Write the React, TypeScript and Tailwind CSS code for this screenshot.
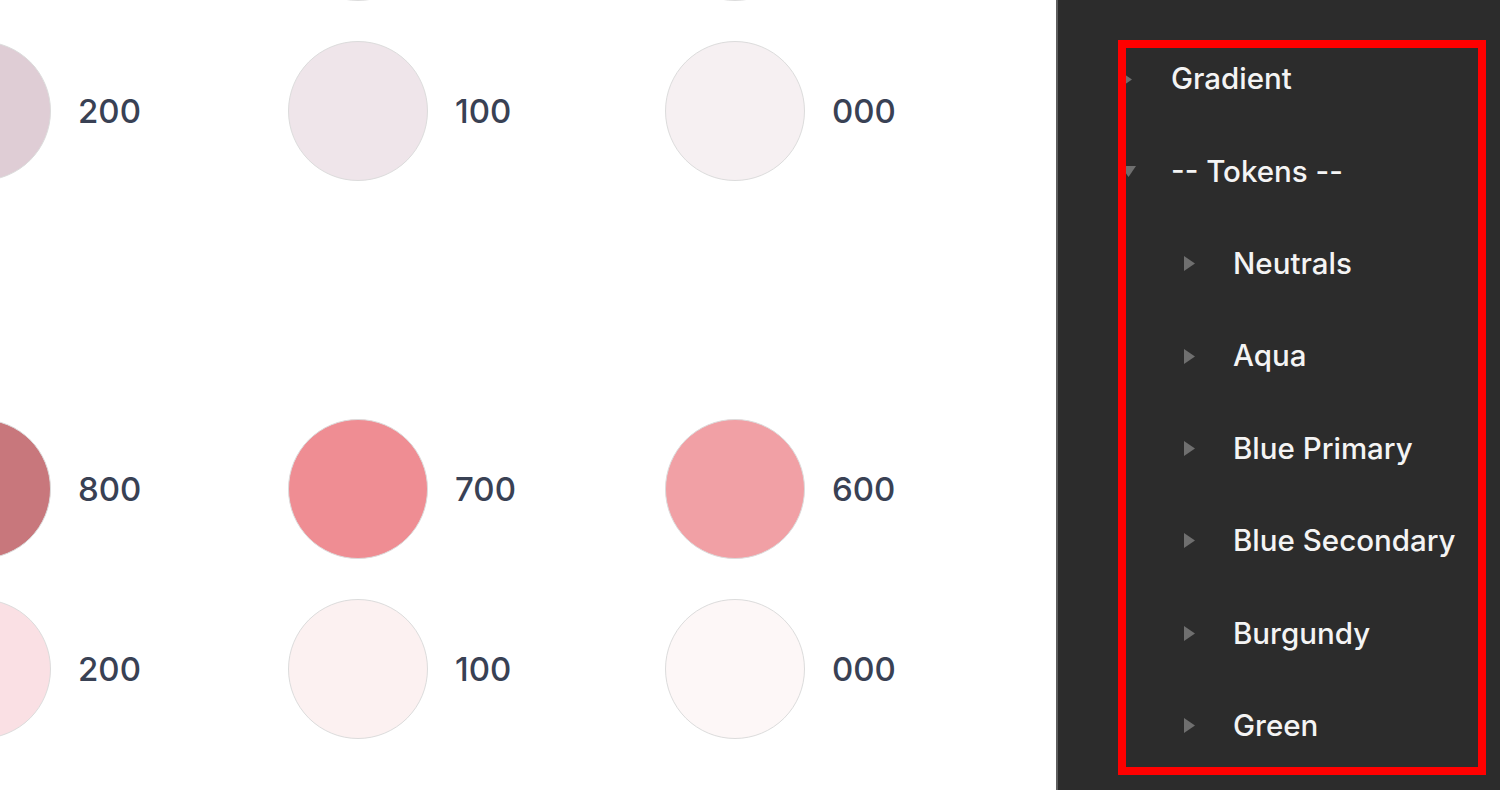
import React from "react";

type Swatch = { color: string; label: string };

const rows: Swatch[][] = [
  [
    { color: "#f3eef1", label: "" },
    { color: "#f8f5f6", label: "" },
    { color: "#fbf9fa", label: "" },
  ],
  [
    { color: "#dfcdd5", label: "200" },
    { color: "#efe5ea", label: "100" },
    { color: "#f6f0f2", label: "000" },
  ],
  [
    { color: "#c8777c", label: "800" },
    { color: "#ef8d93", label: "700" },
    { color: "#f1a0a5", label: "600" },
  ],
  [
    { color: "#fae0e4", label: "200" },
    { color: "#fcf1f1", label: "100" },
    { color: "#fdf7f7", label: "000" },
  ],
];

const tree = [
  { name: "Gradient", depth: 0, open: false },
  { name: "-- Tokens --", depth: 0, open: true },
  { name: "Neutrals", depth: 1, open: false },
  { name: "Aqua", depth: 1, open: false },
  { name: "Blue Primary", depth: 1, open: false },
  { name: "Blue Secondary", depth: 1, open: false },
  { name: "Burgundy", depth: 1, open: false },
  { name: "Green", depth: 1, open: false },
];

function SwatchCell({ swatch }: { swatch: Swatch }) {
  return (
    <div className="flex items-center gap-[27px]">
      <div
        className="w-[140px] h-[140px] shrink-0 rounded-full border border-[#dcdcdc]"
        style={{ backgroundColor: swatch.color }}
      />
      <span className="text-[33px] font-medium leading-none text-[#394154]">{swatch.label}</span>
    </div>
  );
}

function Caret({ open }: { open: boolean }) {
  if (open) {
    return (
      <svg width="15" height="11" viewBox="0 0 15 11" className="shrink-0">
        <path d="M0 0 L15 0 L7.5 11 Z" fill="#6f6f6f" />
      </svg>
    );
  }
  return (
    <svg width="11" height="15" viewBox="0 0 11 15" className="shrink-0">
      <path d="M0 0 L11 7.5 L0 15 Z" fill="#6f6f6f" />
    </svg>
  );
}

export default function App() {
  return (
    <div className="w-[1500px] h-[792px] overflow-hidden bg-white flex" style={{ fontFamily: "Inter, 'Noto Sans', sans-serif" }}>
      {/* Swatch canvas */}
      <div className="w-[1056px] h-full shrink-0 overflow-hidden">
        <div className="ml-[-89px] mt-[-139px] flex flex-col">
          {rows.map((row, i) => (
            <div
              key={i}
              className={`grid grid-cols-[377px_377px_377px] ${i === 0 ? "" : i === 2 ? "mt-[238px]" : "mt-[40px]"}`}
            >
              {row.map((s, j) => (
                <SwatchCell key={j} swatch={s} />
              ))}
            </div>
          ))}
        </div>
      </div>

      {/* Layer panel */}
      <div className="h-[790px] flex-1 bg-[#2c2c2c] border-l-2 border-[#5e5e5e] pt-[40px] pl-[60px]">
        <div className="relative w-[368px] h-[735px]">
          <div className="flex flex-col gap-[56.4px] pt-[21px] pl-[3px]">
            {tree.map((item) => (
              <div
                key={item.name}
                className={`flex items-center h-[36px] ${item.depth === 1 ? "pl-[63px] gap-[38px]" : "gap-[39px]"}`}
              >
                <div className="w-[11px] flex justify-start">
                  <Caret open={item.open} />
                </div>
                <span className="text-[29.5px] font-medium leading-none text-[#f4f4f4] whitespace-nowrap">
                  {item.name}
                </span>
              </div>
            ))}
          </div>
          <div className="absolute inset-0 border-[8px] border-[#ff0000] pointer-events-none" />
        </div>
      </div>
    </div>
  );
}
